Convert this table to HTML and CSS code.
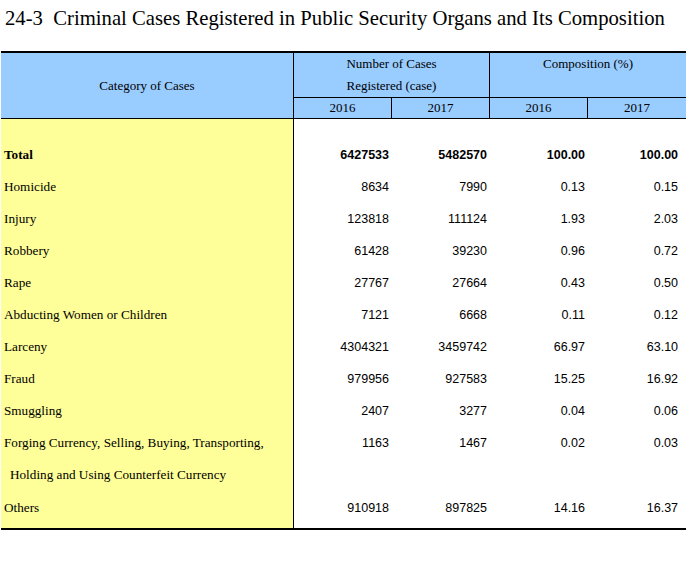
FILE: index.html
```html
<!DOCTYPE html>
<html>
<head>
<meta charset="utf-8">
<link rel="stylesheet" href="styles.css">
</head>
<body>
<h1 class="title">24-3&nbsp; Criminal Cases Registered in Public Security Organs and Its Composition</h1>
<table class="stats">
  <colgroup>
    <col class="c-cat">
    <col class="c-num">
    <col class="c-num">
    <col class="c-num">
    <col class="c-last">
  </colgroup>
  <thead>
    <tr class="h1row">
      <th rowspan="2" class="h-cat">Category of Cases</th>
      <th colspan="2" class="h-group h-sep"><div class="h-lines">Number of Cases<br>Registered (case)</div></th>
      <th colspan="2" class="h-group"><div class="h-lines">Composition (%)</div></th>
    </tr>
    <tr class="h2row">
      <th class="h-year h-sep">2016</th>
      <th class="h-year h-sep">2017</th>
      <th class="h-year h-sep">2016</th>
      <th class="h-year">2017</th>
    </tr>
  </thead>
  <tbody>
    <tr class="spacer"><td class="label"></td><td></td><td></td><td></td><td></td></tr>
    <tr class="total"><td class="label">Total</td><td class="num">6427533</td><td class="num">5482570</td><td class="num">100.00</td><td class="num last">100.00</td></tr>
    <tr><td class="label">Homicide</td><td class="num">8634</td><td class="num">7990</td><td class="num">0.13</td><td class="num last">0.15</td></tr>
    <tr><td class="label">Injury</td><td class="num">123818</td><td class="num">111124</td><td class="num">1.93</td><td class="num last">2.03</td></tr>
    <tr><td class="label">Robbery</td><td class="num">61428</td><td class="num">39230</td><td class="num">0.96</td><td class="num last">0.72</td></tr>
    <tr><td class="label">Rape</td><td class="num">27767</td><td class="num">27664</td><td class="num">0.43</td><td class="num last">0.50</td></tr>
    <tr><td class="label">Abducting Women or Children</td><td class="num">7121</td><td class="num">6668</td><td class="num">0.11</td><td class="num last">0.12</td></tr>
    <tr><td class="label">Larceny</td><td class="num">4304321</td><td class="num">3459742</td><td class="num">66.97</td><td class="num last">63.10</td></tr>
    <tr><td class="label">Fraud</td><td class="num">979956</td><td class="num">927583</td><td class="num">15.25</td><td class="num last">16.92</td></tr>
    <tr><td class="label">Smuggling</td><td class="num">2407</td><td class="num">3277</td><td class="num">0.04</td><td class="num last">0.06</td></tr>
    <tr><td class="label">Forging Currency, Selling, Buying, Transporting,</td><td class="num">1163</td><td class="num">1467</td><td class="num">0.02</td><td class="num last">0.03</td></tr>
    <tr><td class="label indent">Holding and Using Counterfeit Currency</td><td class="num"></td><td class="num"></td><td class="num"></td><td class="num last"></td></tr>
    <tr class="final"><td class="label">Others</td><td class="num">910918</td><td class="num">897825</td><td class="num">14.16</td><td class="num last">16.37</td></tr>
  </tbody>
</table>
</body>
</html>
```

FILE: styles.css
```css
html, body {
  margin: 0;
  padding: 0;
  background: #ffffff;
  overflow: hidden;
}

body {
  font-family: "Liberation Serif", "Times New Roman", serif;
  color: #000;
}

.title {
  margin: 6px 0 21px 5px;
  font-family: "Liberation Serif", "Times New Roman", serif;
  font-weight: normal;
  font-size: 20.7px;
  line-height: 24px;
  white-space: nowrap;
}

.stats {
  margin-left: 1px;
  width: 685px;
  table-layout: fixed;
  border-collapse: separate;
  border-spacing: 0;
  font-size: 13px;
}

.c-cat { width: 293px; }
.c-num { width: 98px; }
.c-last { width: 98px; }

.stats th {
  background: #99ccff;
  font-weight: normal;
  font-family: "Liberation Serif", "Times New Roman", serif;
  font-size: 13px;
  padding: 0;
  text-align: center;
}

.h1row th {
  border-top: 2px solid #000;
  border-bottom: 1px solid #000;
  height: 43px;
  vertical-align: top;
}

.h1row th.h-cat {
  vertical-align: middle;
  border-right: 1px solid #000;
  line-height: 16px;
}

.h-lines {
  line-height: 22px;
}

.h-sep {
  border-right: 1px solid #000;
}

.h2row th {
  height: 20px;
  border-bottom: 1px solid #000;
  line-height: 20px;
  vertical-align: middle;
}

.stats td {
  padding: 0;
  height: 32px;
  vertical-align: middle;
  white-space: nowrap;
}

.stats td.label {
  background: #ffff99;
  border-right: 1px solid #000;
  padding-left: 3px;
  font-family: "Liberation Serif", "Times New Roman", serif;
  font-size: 13.2px;
}

.stats td.indent {
  padding-left: 9px;
}

.stats td.num {
  text-align: right;
  padding-right: 3px;
  font-family: "Liberation Sans", Arial, sans-serif;
  font-size: 12.5px;
}

.stats td.last {
  padding-right: 8px;
}

.spacer td {
  height: 20px;
}

.total td {
  font-weight: bold;
}

.final td {
  height: 34px;
  padding-bottom: 3px;
  border-bottom: 2px solid #000;
}
```
